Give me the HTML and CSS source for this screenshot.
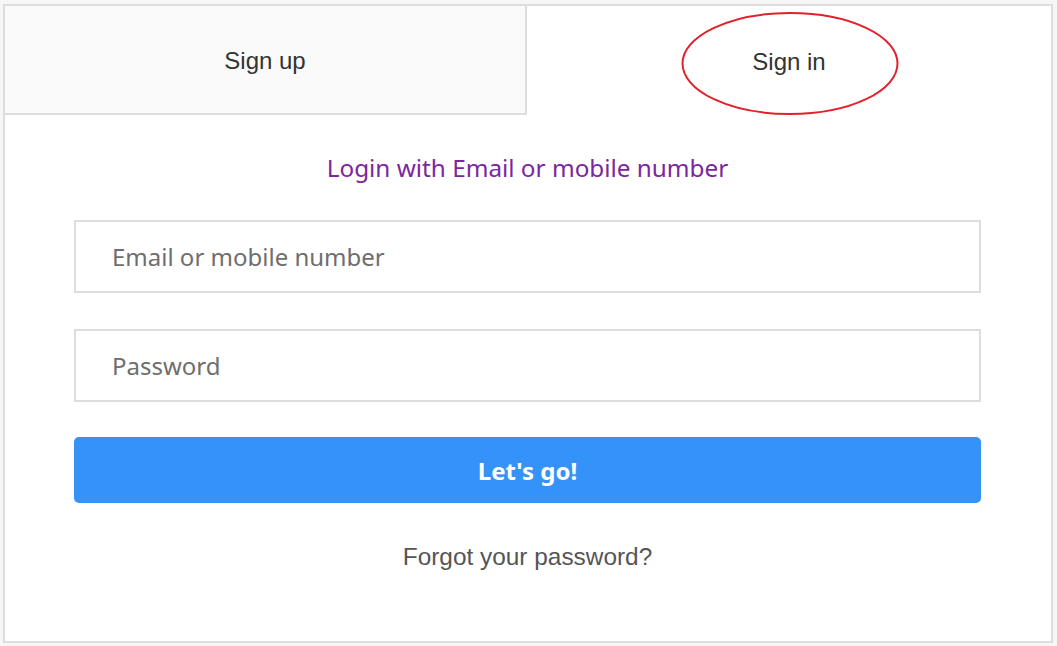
FILE: index.html
```html
<!DOCTYPE html>
<html lang="en">
<head>
<meta charset="utf-8">
<title>Sign in</title>
<link rel="stylesheet" href="styles.css">
</head>
<body>
<div class="panel">
  <div class="tabs">
    <div class="tab tab-inactive">Sign up</div>
    <div class="tab tab-active">Sign in
      <svg class="ring" width="220" height="106" viewBox="0 0 220 106"><ellipse cx="110" cy="52.5" rx="107.5" ry="50.5" fill="none" stroke="#e3212b" stroke-width="2"/></svg>
    </div>
  </div>
  <form class="form">
    <h2 class="heading">Login with Email or mobile number</h2>
    <input class="field" type="text" placeholder="Email or mobile number">
    <input class="field" type="password" placeholder="Password">
    <button class="submit" type="button">Let's go!</button>
    <a class="forgot" href="#">Forgot your password?</a>
  </form>
</div>
</body>
</html>
```

FILE: styles.css
```css
html, body {
  margin: 0;
  padding: 0;
  background: #f6f6f6;
}
body {
  padding: 4px 0 0 3px;
}
.panel {
  width: 1046px;
  height: 635px;
  border: 2px solid #dddddd;
  background: #ffffff;
  display: flex;
  flex-direction: column;
}
.tabs {
  display: flex;
  height: 109px;
}
.tab {
  flex: 1;
  display: flex;
  align-items: center;
  justify-content: center;
  font-family: "Liberation Sans", Arial, sans-serif;
  font-size: 24px;
  color: #333333;
  box-sizing: border-box;
}
.tab-inactive {
  background: #fafafa;
  border-right: 2px solid #dddddd;
  border-bottom: 2px solid #dddddd;
  flex: 0 0 522px;
  padding-top: 2px;
}
.tab-active {
  position: relative;
  background: #ffffff;
  padding-top: 2px;
}
.ring {
  position: absolute;
  left: 153px;
  top: 5px;
}
.form {
  display: flex;
  flex-direction: column;
  padding: 0 70px 0 69px;
}
.heading {
  margin: 37px 0 36px;
  font-family: "Noto Sans", "Open Sans", sans-serif;
  font-weight: 400;
  font-size: 24.3px;
  line-height: 32px;
  color: #7b26a0;
  text-align: center;
}
.field {
  height: 73px;
  box-sizing: border-box;
  border: 2px solid #dddddd;
  padding: 0 36px;
  font-family: "Noto Sans", "Open Sans", sans-serif;
  font-size: 24px;
  color: #333;
  outline: none;
  margin: 0 0 36px;
}
.field::placeholder {
  color: #6e6e6e;
}
.field + .submit {
  margin-top: -1px;
}
.submit {
  height: 66px;
  border: none;
  border-radius: 5px;
  background: #3492f8;
  color: #ffffff;
  font-family: "Noto Sans", "Open Sans", sans-serif;
  font-weight: 700;
  font-size: 24px;
  cursor: pointer;
}
.forgot {
  margin-top: 39px;
  text-align: center;
  font-family: "Liberation Sans", Arial, sans-serif;
  font-size: 24.4px;
  line-height: 30px;
  color: #555555;
  text-decoration: none;
}
```
